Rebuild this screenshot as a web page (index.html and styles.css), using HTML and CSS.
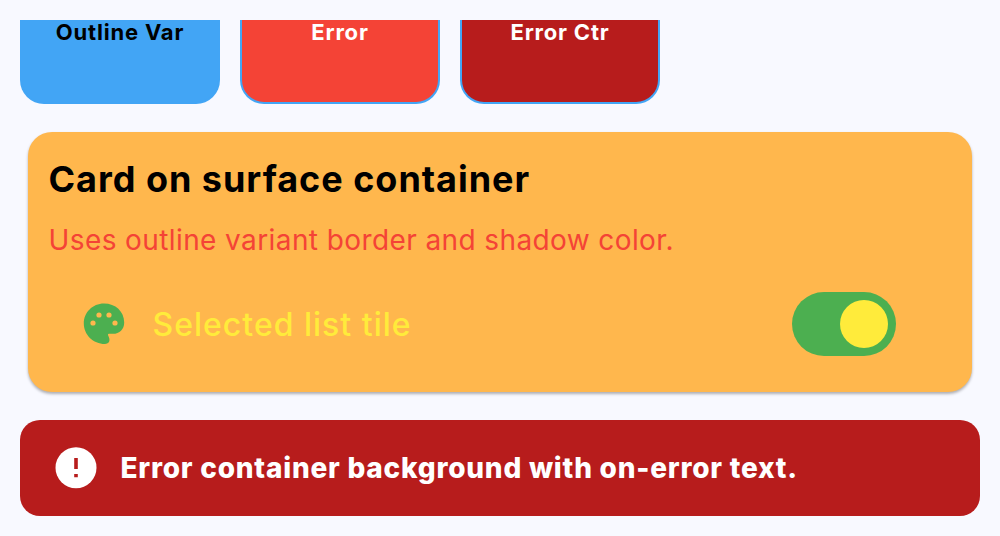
FILE: index.html
```html
<!DOCTYPE html>
<html lang="en">
<head>
<meta charset="utf-8">
<title>Color scheme</title>
<link rel="stylesheet" href="styles.css">
</head>
<body>
<main class="page">
  <section class="swatches">
    <div class="swatch outline-variant"><span>Outline Var</span></div>
    <div class="swatch error"><span>Error</span></div>
    <div class="swatch error-container"><span>Error Ctr</span></div>
  </section>
  <section class="card">
    <h1 class="card-title"><span>Card on surface container</span></h1>
    <p class="card-text"><span>Uses outline variant border and shadow color.</span></p>
    <div class="tile">
      <svg class="palette" viewBox="0 0 48 48"><path class="shape" d="M24 3.500C12.500 3.500 3.800 12.500 3.800 23.500S13 44 25 44c3.200 0 5-2 4.300-5.400-.4-1.800-1.300-2.600-1.300-4 0-.500.300-.8.900-.8H33c6.500 0 11.200-4.600 11.200-11.400C44.200 11.500 35.500 3.500 24 3.500Z"/><circle cx="13" cy="23" r="2.600"/><circle cx="19" cy="15" r="2.600"/><circle cx="29" cy="15" r="2.600"/><circle cx="35" cy="23" r="2.600"/></svg>
      <span class="tile-title">Selected list tile</span>
      <div class="switch"><div class="thumb"></div></div>
    </div>
  </section>
  <section class="banner">
    <svg class="alert" viewBox="0 0 48 48"><circle cx="24" cy="23.700" r="20.500"/><path d="M22.200 14h3.600v11h-3.600zM22.200 30h3.600v3.200h-3.600z"/></svg>
    <span class="banner-text">Error container background with on-error text.</span>
  </section>
</main>
</body>
</html>
```
FILE: styles.css
```css
* { box-sizing: border-box; }
body { margin: 0; background: #f8f9ff; font-family: Inter, "Liberation Sans", sans-serif; }
.page { height: 536px; padding: 20px; overflow: hidden; }
.swatches { display: flex; gap: 20px; height: 84px; }
.swatch { width: 200px; border: 2px solid #42a5f5; border-top: 0; border-radius: 0 0 24px 24px; text-align: center; font-size: 22px; font-weight: 750; line-height: 24px; letter-spacing: .8px; color: #fff; }
.outline-variant { background: #42a5f5; color: #000; }
.error { background: #f44336; }
.error-container { background: #b71c1c; }
.card { margin: 28px 8px; height: 260px; padding: 23px 20px 24px 20.500px; border-radius: 24px; background: #ffb74d; box-shadow: 0 2px 3px rgba(0,0,0,.3); }
.card-title { margin: 0; font-size: 36px; line-height: 48px; font-weight: 720; letter-spacing: .97px; color: #000; white-space: nowrap; }
.card-text { margin: 17px 0 0; font-size: 28px; line-height: 40px; font-weight: 430; letter-spacing: .4px; color: #f44336; white-space: nowrap; }
.tile { display: flex; align-items: center; height: 112px; margin-top: 8px; padding: 0 56px 0 31.500px; }
.palette { width: 48px; height: 48px; fill: #ffb74d; }
.palette .shape { fill: #4caf50; }
.tile-title { margin-left: 24.500px; font-size: 32px; font-weight: 450; letter-spacing: 1px; color: #ffeb3b; }
.switch { display: flex; align-items: center; justify-content: flex-end; width: 104px; height: 64px; margin-left: auto; padding: 8px; border-radius: 32px; background: #4caf50; }
.thumb { width: 48px; height: 48px; border-radius: 50%; background: #ffeb3b; }
.banner { display: flex; align-items: center; gap: 20.500px; height: 96px; padding: 0 32px; border-radius: 20px; background: #b71c1c; color: #fff; }
.alert { width: 48px; height: 48px; fill: #fff; }
.alert path { fill: #b71c1c; }
.banner-text { font-size: 28px; font-weight: 760; letter-spacing: .77px; }
```
